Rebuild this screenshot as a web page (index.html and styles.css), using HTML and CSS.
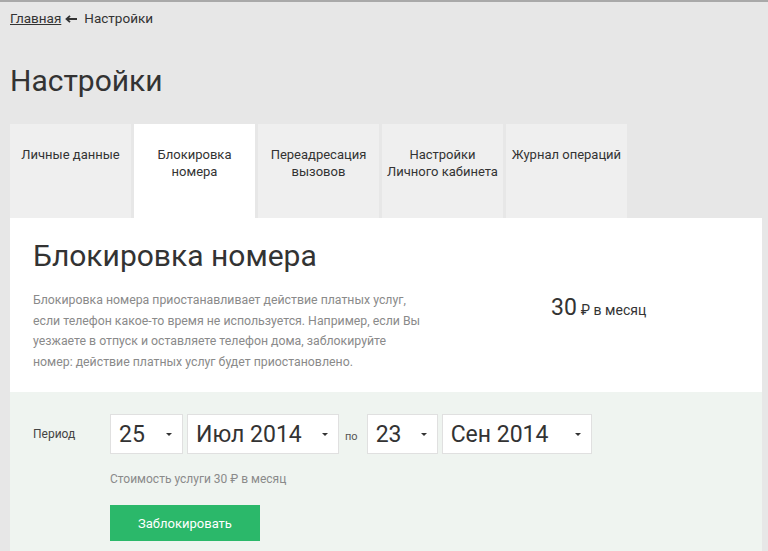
FILE: index.html
```html
<!DOCTYPE html>
<html lang="ru">
<head>
<meta charset="utf-8">
<link rel="stylesheet" href="styles.css">
</head>
<body>
<div class="page">
  <nav class="crumbs"><a href="#" class="crumb-link">Главная</a><svg class="crumb-arrow" width="12" height="8" viewBox="0 0 12 8"><path d="M12 4H2M5 0.8L1.5 4L5 7.2" fill="none" stroke="#333" stroke-width="1.8"/></svg><span>Настройки</span></nav>
  <h1 class="title">Настройки</h1>
  <div class="tabs">
    <div class="tab">Личные данные</div>
    <div class="tab active">Блокировка<br>номера</div>
    <div class="tab">Переадресация<br>вызовов</div>
    <div class="tab">Настройки<br>Личного кабинета</div>
    <div class="tab">Журнал операций</div>
  </div>
  <section class="panel">
    <div class="info">
      <div class="info-text">
        <h2 class="block-title">Блокировка номера</h2>
        <p class="desc">Блокировка номера приостанавливает действие платных услуг, если телефон какое-то время не используется. Например, если Вы уезжаете в отпуск и оставляете телефон дома, заблокируйте номер: действие платных услуг будет приостановлено.</p>
      </div>
      <div class="price"><span class="price-num">30</span> <span class="price-unit">₽ в месяц</span></div>
    </div>
    <div class="form">
      <div class="period-row">
        <span class="label">Период</span>
        <div class="select s-day"><span>25</span><i class="caret"></i></div>
        <div class="select s-month"><span>Июл 2014</span><i class="caret"></i></div>
        <span class="po">по</span>
        <div class="select s-day2"><span>23</span><i class="caret"></i></div>
        <div class="select s-month2"><span>Сен 2014</span><i class="caret"></i></div>
      </div>
      <div class="form-body">
        <p class="cost">Стоимость услуги 30 ₽ в месяц</p>
        <button class="btn">Заблокировать</button>
      </div>
    </div>
  </section>
</div>
</body>
</html>
```

FILE: styles.css
```css
* { box-sizing: border-box; }
html, body { margin: 0; padding: 0; }
body {
  background: #e7e7e7;
  border-top: 2px solid #a9a9a9;
  font-family: Roboto, "Noto Sans", sans-serif;
  color: #333;
  height: 551px;
  overflow: hidden;
}
.page { padding: 0 6px 0 10px; }
.crumbs {
  font-size: 13.5px;
  line-height: 16px;
  padding: 8px 0 8px;
  color: #333;
  display: flex;
  align-items: center;
}
.crumb-link { color: #333; text-decoration: underline; }
.crumb-arrow { margin: 1px 7px 0 4px; }
.title {
  font-weight: 400;
  font-size: 30px;
  line-height: 36px;
  margin: 29px 0 25px;
  color: #333;
}
.tabs {
  display: flex;
  gap: 3px;
  height: 94px;
}
.tab {
  width: 121px;
  background: #efefef;
  text-align: center;
  font-size: 13px;
  line-height: 17px;
  padding-top: 22px;
  color: #333;
}
.tab.active { background: #fff; }
.panel { background: #fff; }
.info {
  display: flex;
  padding: 18px 23px 25px;
  height: 174px;
}
.info-text { width: 390px; flex: none; }
.block-title {
  font-weight: 400;
  font-size: 30px;
  line-height: 40px;
  margin: 0 0 14px;
  color: #333;
}
.desc {
  margin: 0;
  font-size: 12.3px;
  line-height: 20.5px;
  color: #8a8a8a;
}
.price {
  margin-left: 128px;
  padding-top: 58px;
  color: #333;
  white-space: nowrap;
}
.price-num { font-size: 23px; }
.price-unit { font-size: 14px; }
.form {
  background: #eff4f0;
  padding: 22px 23px 0;
  height: 159px;
}
.period-row {
  display: flex;
  align-items: center;
  height: 40px;
}
.label {
  font-size: 12px;
  width: 77px;
  color: #444;
}
.select {
  height: 40px;
  background: #fff;
  border: 1px solid #e0e0e0;
  display: flex;
  align-items: center;
  justify-content: space-between;
  padding: 0 10px 0 8px;
  font-size: 23px;
  color: #333;
  margin-right: 4px;
}
.s-day { width: 73px; }
.s-month { width: 152px; }
.s-day2 { width: 71px; }
.s-month2 { width: 150px; }
.po {
  font-size: 11px;
  color: #555;
  margin: 4px 9px 0 2px;
}
.caret {
  width: 0; height: 0;
  border-left: 3px solid transparent;
  border-right: 3px solid transparent;
  border-top: 3px solid #333;
}
.form-body { padding-left: 77px; }
.cost {
  font-size: 12px;
  color: #8a8a8a;
  margin: 18px 0 19px;
  line-height: 14px;
}
.btn {
  display: block;
  width: 150px;
  height: 36px;
  background: #2bb86a;
  border: 0;
  color: #fff;
  font-family: inherit;
  font-size: 13px;
  padding: 0;
}
```
